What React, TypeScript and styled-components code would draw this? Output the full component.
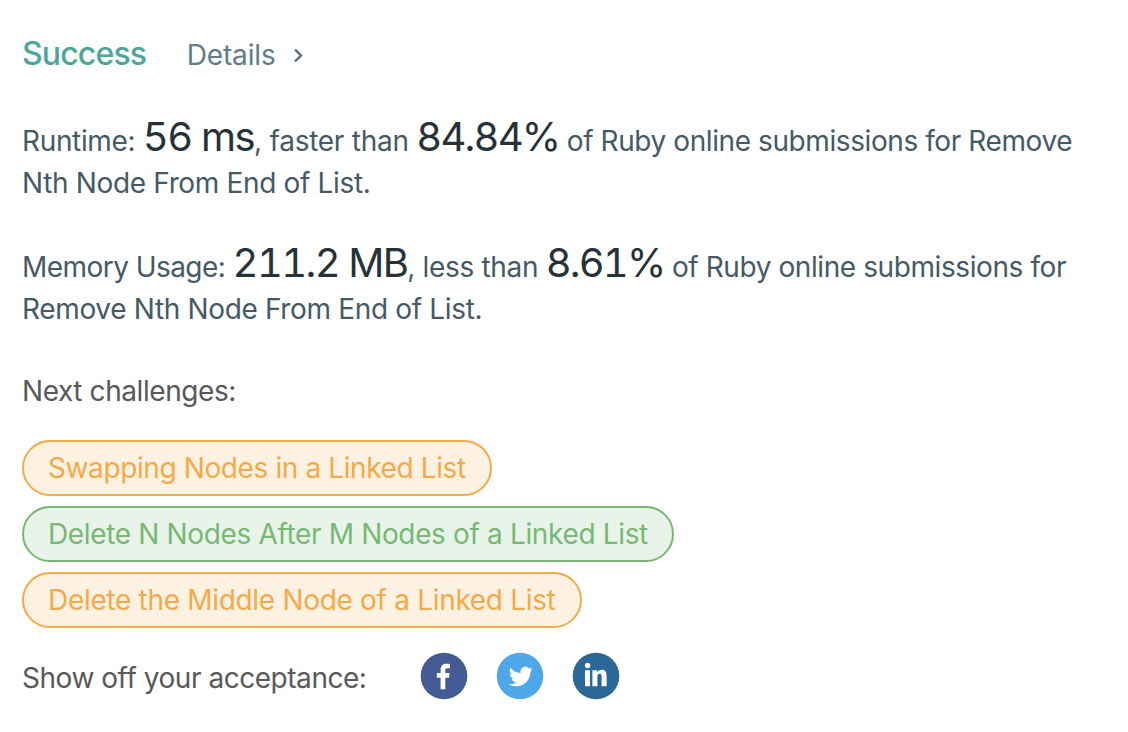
import React from 'react';
import styled, { createGlobalStyle } from 'styled-components';

const Global = createGlobalStyle`
  * { box-sizing: border-box; }
  body { margin: 0; background: #fff; font-family: Inter, "Liberation Sans", sans-serif; }
`;
const Page = styled.main`
  height: 732px; padding: 32px 22px 0; display: flex; flex-direction: column; align-items: flex-start;
  color: #455a64; font-size: 28px; line-height: 42px; white-space: nowrap; overflow: hidden;
`;
const Header = styled.header`display: flex; align-items: center; height: 42px;`;
const Status = styled.h1`
  margin: 0 40.5px 0 0; padding-top: 1px; font-size: 32px; font-weight: 500; color: #4da699; letter-spacing: -0.85px;
`;
const Details = styled.a`display: flex; align-items: center; gap: 15px; padding-top: 3px; color: #607d8b; letter-spacing: -0.15px;`;
const Stat = styled.p`margin: 46px 0 -4px; height: 84px;`;
const Line = styled.span`display: block; height: 42px;`;
const Text = styled.span<{ $ls?: number }>`letter-spacing: ${p => p.$ls ?? -0.34}px;`;
const Value = styled.span<{ $ls?: number }>`
  font-size: 40px; line-height: 0; color: #263238; font-feature-settings: "tnum";
  letter-spacing: ${p => p.$ls ?? -1.5}px;
`;
const Label = styled.div`margin-top: 44px; color: #595959; letter-spacing: -0.42px;`;
const Tags = styled.div`display: flex; flex-direction: column; align-items: flex-start; gap: 10px; margin-top: 28px;`;
const Tag = styled.a<{ $easy?: boolean; $ls: number }>`
  height: 56px; line-height: 52px; padding: 0 24px; border-radius: 28px; border: 2px solid;
  letter-spacing: ${p => p.$ls}px;
  color: ${p => p.$easy ? '#78b873' : '#f4aa48'};
  background: ${p => p.$easy ? '#e8f4e9' : '#fdf2e2'};
`;
const Share = styled.div`display: flex; align-items: center; margin-top: 24px; height: 48px; color: #595959;`;
const ShareText = styled.span`padding-top: 4px; letter-spacing: -0.46px;`;
const Icons = styled.div`display: flex; gap: 28px; margin-left: 54px;`;

export default function App() {
  return (
    <Page>
      <Global />
      <Header>
        <Status>Success</Status>
        <Details>Details
          <svg width="14" height="18" viewBox="0 0 14 18" fill="none" stroke="#546e7a" strokeWidth="2.4"><path d="M4 3.5l6 6-6 6" /></svg>
        </Details>
      </Header>
      <Stat>
        <Line>
          <Text>Runtime: </Text><Value>56 ms</Value><Text $ls={-0.26}>, faster than </Text>
          <Value $ls={-1.8}>84.84%</Value><Text $ls={-0.41}> of Ruby online submissions for Remove</Text>
        </Line>
        <Line><Text>Nth Node From End of List.</Text></Line>
      </Stat>
      <Stat>
        <Line>
          <Text $ls={-0.55}>Memory Usage: </Text><Value $ls={-1.6}>211.2 MB</Value><Text>, less than </Text>
          <Value $ls={-1.8}>8.61%</Value><Text $ls={-0.41}> of Ruby online submissions for</Text>
        </Line>
        <Line><Text>Remove Nth Node From End of List.</Text></Line>
      </Stat>
      <Label>Next challenges:</Label>
      <Tags>
        <Tag $ls={-0.39}>Swapping Nodes in a Linked List</Tag>
        <Tag $easy $ls={-0.35}>Delete N Nodes After M Nodes of a Linked List</Tag>
        <Tag $ls={-0.31}>Delete the Middle Node of a Linked List</Tag>
      </Tags>
      <Share><ShareText>Show off your acceptance:</ShareText>
        <Icons>
          <svg width="48" height="48" viewBox="0 0 48 48"><circle cx="24" cy="24" r="23.3" fill="#445a94" /><path fill="#fff" d="M20.6 37.2V25.8h-3.8v-4.7h3.8v-3.5c0-4.1 2.4-5.8 6-5.8 1.3 0 2.6.1 3.4.2v4.2h-2.4c-1.8 0-2.3.8-2.3 2.2v2.7h4.3l-.7 4.7h-3.6v11.4z" /></svg>
          <svg width="48" height="48" viewBox="0 0 64 64"><circle cx="32" cy="32" r="31" fill="#4da7e8" /><path transform="translate(1 .8)" fill="#fff" d="M48 22.1c-1.2.5-2.4.9-3.8 1 1.4-.8 2.4-2.1 2.9-3.6-1.3.8-2.7 1.3-4.2 1.6C41.7 19.8 40 19 38.2 19c-3.6 0-6.6 2.9-6.6 6.6 0 .5.1 1 .2 1.5-5.5-.3-10.3-2.9-13.5-6.9-.6 1-.9 2.1-.9 3.3 0 2.3 1.2 4.3 2.9 5.5-1.1 0-2.1-.3-3-.8v.1c0 3.2 2.3 5.8 5.3 6.4-.6.1-1.1.2-1.7.2-.4 0-.8 0-1.2-.1.8 2.6 3.3 4.5 6.1 4.6-2.2 1.8-5.1 2.8-8.2 2.8-.5 0-1.1 0-1.6-.1 2.9 1.9 6.4 2.9 10.1 2.9 12.1 0 18.7-10 18.7-18.7v-.8c1.2-1 2.3-2.1 3.2-3.4z" /></svg>
          <svg width="48" height="48" viewBox="0 0 48 48"><circle cx="24" cy="24" r="23.3" fill="#2b6797" /><g fill="#fff"><circle cx="15.6" cy="13.5" r="2.7" /><path d="M13 18.2h5v16.1h-5zM20.4 18.2h4.7v2.2c.8-1.5 2.6-2.6 4.8-2.6 3.5 0 4.7 2.5 4.7 6.2v10.3h-5v-9.5c0-2.1-.6-3.1-2-3.1-1.7 0-2.2 1.3-2.2 3.1v9.5h-5z" /></g></svg>
        </Icons>
      </Share>
    </Page>
  );
}
